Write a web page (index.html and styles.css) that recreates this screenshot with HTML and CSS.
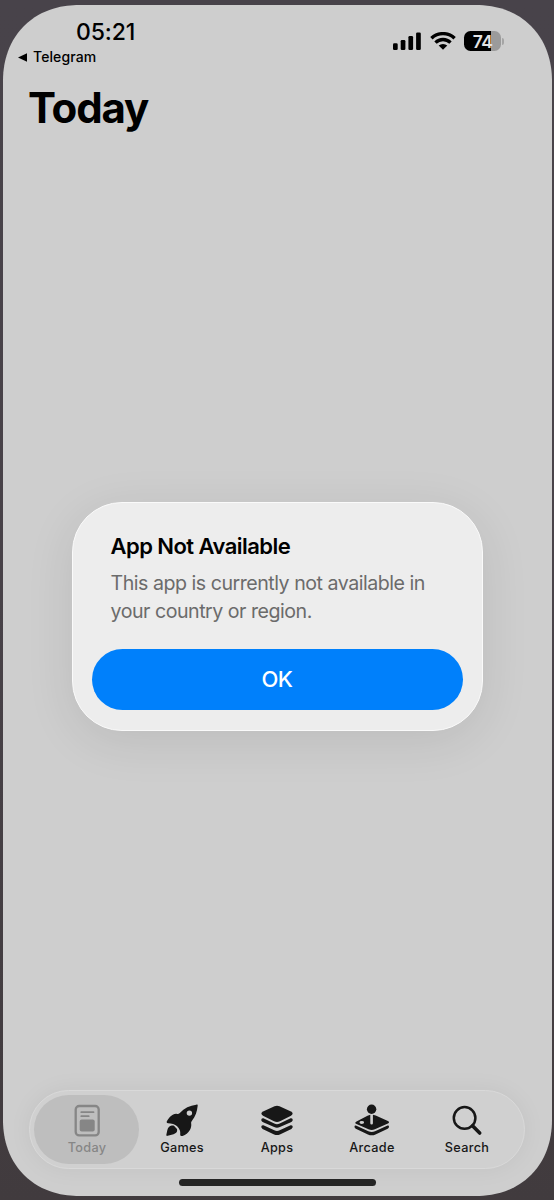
FILE: index.html
```html
<!DOCTYPE html>
<html lang="en">
<head>
<meta charset="utf-8">
<title>Today</title>
<link rel="stylesheet" href="styles.css">
</head>
<body>
<main class="screen">
  <header class="status">
    <div class="status-left">
      <div class="time">05:21</div>
      <div class="back"><svg width="10" height="9" viewBox="0 0 10 9"><path d="M0 4.5 9 .3v8.4z"/></svg><span>Telegram</span></div>
    </div>
    <div class="status-right">
      <svg width="28" height="18" viewBox="0 0 28 18"><rect y="11.3" width="4.7" height="6.7" rx="1.3"/><rect x="7.7" y="8" width="4.7" height="10" rx="1.3"/><rect x="15.4" y="4" width="4.7" height="14" rx="1.3"/><rect x="23.1" y=".4" width="4.7" height="17.6" rx="1.3"/></svg>
      <svg class="wifi" width="26" height="18" viewBox="0 0 26 18"><g fill="none" stroke="#000" stroke-width="3.4"><path d="M1.4 6.3a16.7 16.7 0 0 1 23.2 0"/><path d="M5.5 10.6a10.8 10.8 0 0 1 15 0"/></g><path d="m8.7 13.6 4.3 4.2 4.3-4.2a6.3 6.3 0 0 0-8.6 0z"/></svg>
      <div class="battery"><span>74</span></div>
      <div class="nub"></div>
    </div>
  </header>
  <h1 class="title">Today</h1>
  <section class="alert">
    <h2 class="alert-title">App Not Available</h2>
    <p class="alert-text">This app is currently not available in<br>your country or region.</p>
    <button class="ok">OK</button>
  </section>
  <nav class="tabs">
    <div class="tab selected">
      <svg width="36" height="34" viewBox="0 0 36 34"><rect x="6.7" y="3" width="23" height="29.4" rx="3.5" fill="none" stroke="currentColor" stroke-width="2.3"/><path d="M12.3 9.2h12.2M12.3 13.2h7.4" stroke="currentColor" stroke-width="1.8" stroke-linecap="round"/><rect x="10.7" y="16.5" width="15" height="12" rx="2"/></svg>
      <span>Today</span>
    </div>
    <div class="tab">
      <svg width="36" height="34" viewBox="0 0 36 34"><path fill-rule="evenodd" d="M32.2 1.7C33.5 1.3 34 1.9 33.6 3.3 33.1 8.6 31.6 13.2 28 17.7c-.8 1-1 1.8-.8 2.9.3 2.3-.2 4.4-1.3 6.5-1.7 3-4.3 4.9-7.3 5.8-1.6.4-2.5-.2-2.4-1.4.1-1.6.1-3.2-.4-4.3-1.4-3-3.5-5-6.7-6.1-1.8-.7-3.5-.9-5-.9-1.4 0-1.8-1-1.1-2.1C4.3 15.9 6.2 13.2 8.8 11.8c1.4-.8 2.8-1.1 4.2-.9 1.2.2 1.9-.1 2.8-1C20.2 5.2 26 2.4 32.2 1.7zM25.4 7.4a2.7 2.7 0 1 0 0 5.4 2.7 2.7 0 0 0 0-5.4z"/><path d="M7.8 22.6c1.4-.5 2.6.1 3.4 1.5.6 1 1.7 1.3 1.9 2.5.4 2.8-1.7 4.4-4.5 4.9l-4.9 1.3c-1.1.3-1.6-.2-1.3-1.3l.9-4.2C3.8 24.8 5.5 23 7.8 22.6z"/></svg>
      <span>Games</span>
    </div>
    <div class="tab">
      <svg width="36" height="34" viewBox="0 0 36 34"><path d="M15.5 3.2q2.500-1 5 0L32 8.500q3.300 1.700 0 4.200l-11 5.500q-3 1.500-6 0l-11-5.500q-3.300-2.500 0-4.200z"/><path d="M2.400 16.100q.6-1 2-.8L15.300 20.600q2.700 1.200 5.400 0L31.600 15.300q1.400-.2 2 .8.600 1.800-1.200 2.900l-11.500 5q-2.900 1.300-5.800 0L3.600 19q-1.800-1.100-1.200-2.900z"/><path d="M2.400 23q.6-1 2-.8l10.900 5.100q2.700 1.200 5.400 0L31.600 22.200q1.400-.2 2 .8.600 1.800-1.200 2.900l-11.500 5.500q-2.900 1.300-5.800 0L3.600 25.900q-1.800-1.100-1.200-2.900z"/></svg>
      <span>Apps</span>
    </div>
    <div class="tab">
      <svg width="36" height="34" viewBox="0 0 36 34"><path fill-rule="evenodd" d="M16.300 11.800v8.500a1.300 1.300 0 0 0 2.600 0v-8.500l2.800.8 12.200 5.500q2.200 1.200 0 2.500l-13 5.700q-3.200 1.400-6.400 0l-12-5.300q-2.500-1.300 0-2.600l11-5.700zM7.800 18.100a2.300 1.400 0 1 0 0 2.800 2.300 1.400 0 0 0 0-2.800z"/><circle cx="17.600" cy="6.200" r="4.700"/><path d="M.5 23.300q.2-1 1.400-.7l12.500 5.600q3.300 1.400 6.600 0l12.600-5.600q1.200-.3 1.400.7.200 1.600-1.300 2.500L21.500 31.500q-3.800 1.700-7.600 0L1.800 25.800Q.3 24.900.5 23.300z"/></svg>
      <span>Arcade</span>
    </div>
    <div class="tab">
      <svg width="36" height="34" viewBox="0 0 36 34"><circle cx="15.600" cy="14.900" r="10.800" fill="none" stroke="currentColor" stroke-width="2.500"/><path d="m23.500 22.800 7.200 7.200" stroke="currentColor" stroke-width="3.600" stroke-linecap="round"/></svg>
      <span>Search</span>
    </div>
  </nav>
  <div class="home"></div>
</main>
</body>
</html>
```
FILE: styles.css
```css
* { box-sizing: border-box; }
body {
  margin: 0;
  padding: 5px 2px 4px 3px;
  height: 1200px;
  background: linear-gradient(#48434a, #484248 50%, #413b3e);
  font-family: Inter, "Liberation Sans", sans-serif;
  color: #000;
}
.screen {
  height: 1191px;
  border-radius: 76px;
  corner-shape: superellipse(1.1);
  background: #cecece;
  overflow: hidden;
  display: flex;
  flex-direction: column;
  align-items: center;
}
.status {
  width: 100%;
  height: 76px;
  flex: none;
  display: flex;
  justify-content: space-between;
  padding: 13px 48px 0 15px;
}
.time {
  margin-left: 58px;
  font-size: 23px;
  line-height: 28px;
  font-weight: 500;
  letter-spacing: -.1px;
}
.back {
  display: flex;
  align-items: center;
  gap: 5px;
  margin-top: 1px;
  font-size: 14px;
  line-height: 20px;
  font-weight: 500;
  letter-spacing: .1px;
}
.status-right { display: flex; align-items: flex-start; padding-top: 14px; }
.wifi { margin: 0 8px 0 9px; }
.battery {
  width: 37px;
  height: 20px;
  margin-top: -1px;
  border-radius: 6.5px;
  background: linear-gradient(90deg, #000 74%, #9b9b9b 74%);
  color: #e4e4e4;
  font-size: 17.5px;
  line-height: 21px;
  font-weight: 600;
  text-align: center;
  letter-spacing: -.6px;
}
.nub { width: 2px; height: 7px; margin: 6px 0 0 1px; border-radius: 0 3px 3px 0; background: #a5a5a5; }
.title {
  width: 100%;
  margin: 0;
  padding-left: 25px;
  font-size: 42px;
  line-height: 54px;
  font-weight: 700;
  letter-spacing: -1.15px;
}
.alert {
  width: 411px;
  height: 229px;
  flex: none;
  margin: 367px 1px 0 0;
  padding: 30px 19px 19px;
  border: 1.5px solid #fafafa;
  border-radius: 50px;
  background: #ededed;
  box-shadow: 0 10px 50px rgba(0,0,0,.09);
}
.alert-title {
  margin: 0 0 10px 19px;
  font-size: 22px;
  line-height: 26px;
  font-weight: 600;
  letter-spacing: -.55px;
}
.alert-text {
  margin: 0 0 0 19px;
  font-size: 19.6px;
  line-height: 28px;
  color: #6b6b6b;
  letter-spacing: -.48px;
  white-space: nowrap;
}
.ok {
  display: block;
  width: 371px;
  height: 61px;
  margin-top: 24px;
  padding: 0 0 2px;
  border: 0;
  border-radius: 31px;
  background: #0080fb;
  color: #fff;
  font: 500 22px Inter, sans-serif;
  letter-spacing: -.4px;
}
.tabs {
  display: flex;
  width: 496px;
  height: 79px;
  flex: none;
  margin: 358.5px 1px 10px 0;
  padding: 4px;
  border: 1.5px solid #d9d9d9;
  border-radius: 40px;
  background: #d0d0d0;
  box-shadow: 0 0 24px rgba(0,0,0,.05);
}
.tab {
  width: 105px;
  height: 69px;
  flex: none;
  margin-right: -10px;
  padding-top: 8px;
  border-radius: 35px;
  display: flex;
  flex-direction: column;
  align-items: center;
  color: #171717;
  fill: currentColor;
  font-size: 12.7px;
  line-height: 16px;
  font-weight: 500;
  letter-spacing: .3px;
}
.tab span { margin: 3px 0 0 1px; }
.selected { background: #bebebe; color: #868686; }
.home { width: 197px; height: 7px; flex: none; border-radius: 4px; background: #252525; }
```
